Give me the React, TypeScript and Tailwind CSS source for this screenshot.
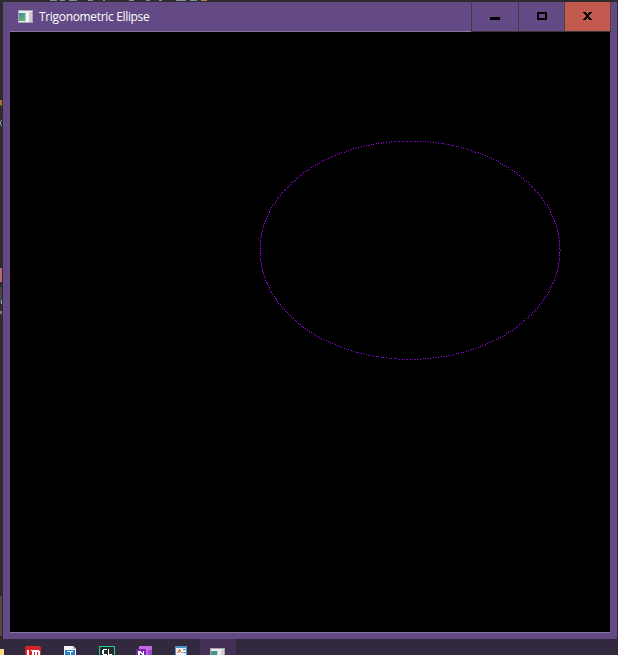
const points = Array.from({ length: 360 }, (_, i) => {
  const t = (i * Math.PI) / 180;
  return [Math.floor(400.001 + 150 * Math.cos(t)), Math.floor(218.18 - 109.15 * Math.sin(t))];
});

const dots = points.map(([x, y]) => `M${x} ${y}h1v1h-1z`).join("");

function AppIcon() {
  return (
    <svg width="15" height="13" viewBox="0 0 15 13" shapeRendering="crispEdges">
      <defs>
        <linearGradient id="pane" x1="0" y1="0" x2="0.6" y2="1">
          <stop offset="0" stopColor="#4a7fa6" />
          <stop offset="0.5" stopColor="#4f9f88" />
          <stop offset="1" stopColor="#5fae78" />
        </linearGradient>
      </defs>
      <rect width="15" height="13" fill="#a9a4b0" />
      <rect x="1" y="1" width="13" height="11" fill="#ececee" />
      <rect x="1" y="3" width="6" height="8" fill="url(#pane)" />
      <rect x="7" y="3" width="1" height="8" fill="#b9cfca" />
      <rect x="8" y="2" width="3" height="10" fill="#f4f4f4" />
      <rect x="11" y="2" width="3" height="10" fill="#cfcdd2" />
    </svg>
  );
}

function TitleBar() {
  return (
    <header className="flex h-[30px] w-full">
      <div className="ml-[7px] flex h-[30px] w-[461px] items-start border-b border-[#84779f] pl-[8px]">
        <div className="mt-[8px] h-[13px] w-[15px]"><AppIcon /></div>
        <h1 className="ml-[6px] mt-[7px] whitespace-nowrap text-[12px] font-normal leading-[16px] tracking-[-0.33px] text-white">Trigonometric Ellipse</h1>
      </div>
      <div className="-mr-px flex h-[30px] w-[140px] border-b border-[#3c363c]">
        <button className="h-[29px] w-[47px] border-l border-[#403940]" aria-label="Minimize">
          <svg width="46" height="29" shapeRendering="crispEdges"><path d="M18 15h10v3H18z" /></svg>
        </button>
        <button className="h-[29px] w-[46px] border-l border-[#403940]" aria-label="Maximize">
          <svg width="45" height="29" shapeRendering="crispEdges"><path fillRule="evenodd" d="M18 10h10v8H18zM20 12v4h6v-4z" /></svg>
        </button>
        <button className="h-[29px] w-[47px] border-x border-[#5b4037] bg-[#c35a50]" aria-label="Close">
          <svg width="45" height="29" shapeRendering="crispEdges"><path d="M18 10h3v1h1v1h1v-1h1v-1h3v1h-1v1h-1v1h-1v2h1v1h1v1h1v1h-3v-1h-1v-1h-1v1h-1v1h-3v-1h1v-1h1v-1h1v-2h-1v-1h-1v-1h-1z" /></svg>
        </button>
      </div>
    </header>
  );
}

function Taskbar() {
  return (
    <footer className="h-[16px] w-full overflow-hidden bg-[#32293f]">
      <svg width="618" height="16" viewBox="0 639 618 16" shapeRendering="crispEdges">
        <path d="M0 639h3v1H0z" fill="#2b292e" />
        <path d="M200 639h36v16h-36z" fill="#443057" />
        <path d="M0 649h4v6H0z" fill="#f6da88" />
        <path d="M26 646h14v1h1v8H25v-8h1z" fill="#d82329" />
        <path d="M27 650h2v5h-2zM31 650h8v1h1v4h-2v-3h-1v3h-2v-3h-1v3h-2v-4h-1z" fill="#fff" />
        <path d="M64 646h9l3 3v6H64z" fill="#f1f2f5" />
        <path d="M73 646l3 3h-3z" fill="#adb4bc" />
        <path d="M65 650h10v5H65z" fill="#2580cd" />
        <path d="M67 651h6v1h-2v3h-1v-3h-3z" fill="#fff" />
        <path d="M99 646h16v9H99z" fill="#22d18b" />
        <path d="M100 647h14v8h-14z" fill="#252c2c" />
        <path d="M103 649h4v1h-3v4h3v1h-4v-1h-1v-4h1zM108 649h1v5h3v1h-4z" fill="#fff" />
        <path d="M139 646h13v9h-13z" fill="#c968e5" />
        <path d="M148 650h4v5h-4z" fill="#9d48c6" />
        <path d="M136 649h10v6h-10z" fill="#7826ae" />
        <path d="M138 651h2l3 3v-3h1v4h-2l-2-2v2h-2z" fill="#fff" />
        <path d="M175 646h12v9h-12z" fill="#4894c7" />
        <path d="M176 648h10v7h-10z" fill="#e7f1f5" />
        <path d="M177 653l2-4h1l2 4h-1l-1-1h-1l-1 1z" fill="#df883d" />
        <path d="M183 649h3v1h-3zM183 652h3v1h-3z" fill="#5b93bd" />
        <path d="M210 648h15v7h-15z" fill="#a9a4b0" />
        <path d="M211 649h13v6h-13z" fill="#ececee" />
        <path d="M211 651h6v4h-6z" fill="#4c9290" />
        <path d="M217 651h1v4h-1z" fill="#b9cfca" />
        <path d="M221 650h3v5h-3z" fill="#cfcdd2" />
      </svg>
    </footer>
  );
}

export default function App() {
  return (
    <main className="flex h-[655px] w-[618px] flex-col overflow-hidden bg-[#2d2b2e] font-['Open_Sans','Noto_Sans',sans-serif]">
      <div className="h-[2px] w-full">
        <svg className="block" width="618" height="2" shapeRendering="crispEdges">
          <path d="M50 .5h7M60 .5h5M69 .5h8M88 .5h5M103 .5h2M129 .5h5M146 .5h4M159 .5h3M176 .5h10M190 .5h7M201 .5h3" stroke="#819196" />
          <path d="M204 .5h3" stroke="#bb7544" />
        </svg>
      </div>
      <div className="flex h-[637px]">
        <aside className="w-[3px]">
          <svg className="block" width="3" height="637" viewBox="0 2 3 637" shapeRendering="crispEdges">
            <path d="M0 100h2v2H0zM1 102h1v4H1zM0 102h1v3H0z" fill="#a87623" />
            <path d="M1 120h1v1H1zM0 121h1v4H0zM1 125h1v1H1z" fill="#689cab" />
            <path d="M0 268h2v14H0z" fill="#b36971" />
            <path d="M0 287h2v16H0z" fill="#41454a" />
            <path d="M1 300h1v4H1z" fill="#75a9bb" />
            <path d="M0 311h2v3H0z" fill="#74777b" />
            <path d="M0 596h2v40H0z" fill="#59473f" />
          </svg>
        </aside>
        <section className="flex w-[614px] flex-col bg-[#644a84]">
          <TitleBar />
          <div className="ml-[7px] w-[600px] border-b border-[#84779f]">
            <svg className="block bg-black" width="600" height="600" shapeRendering="crispEdges"><path d={dots} fill="#a400ff" /></svg>
          </div>
        </section>
      </div>
      <Taskbar />
    </main>
  );
}
